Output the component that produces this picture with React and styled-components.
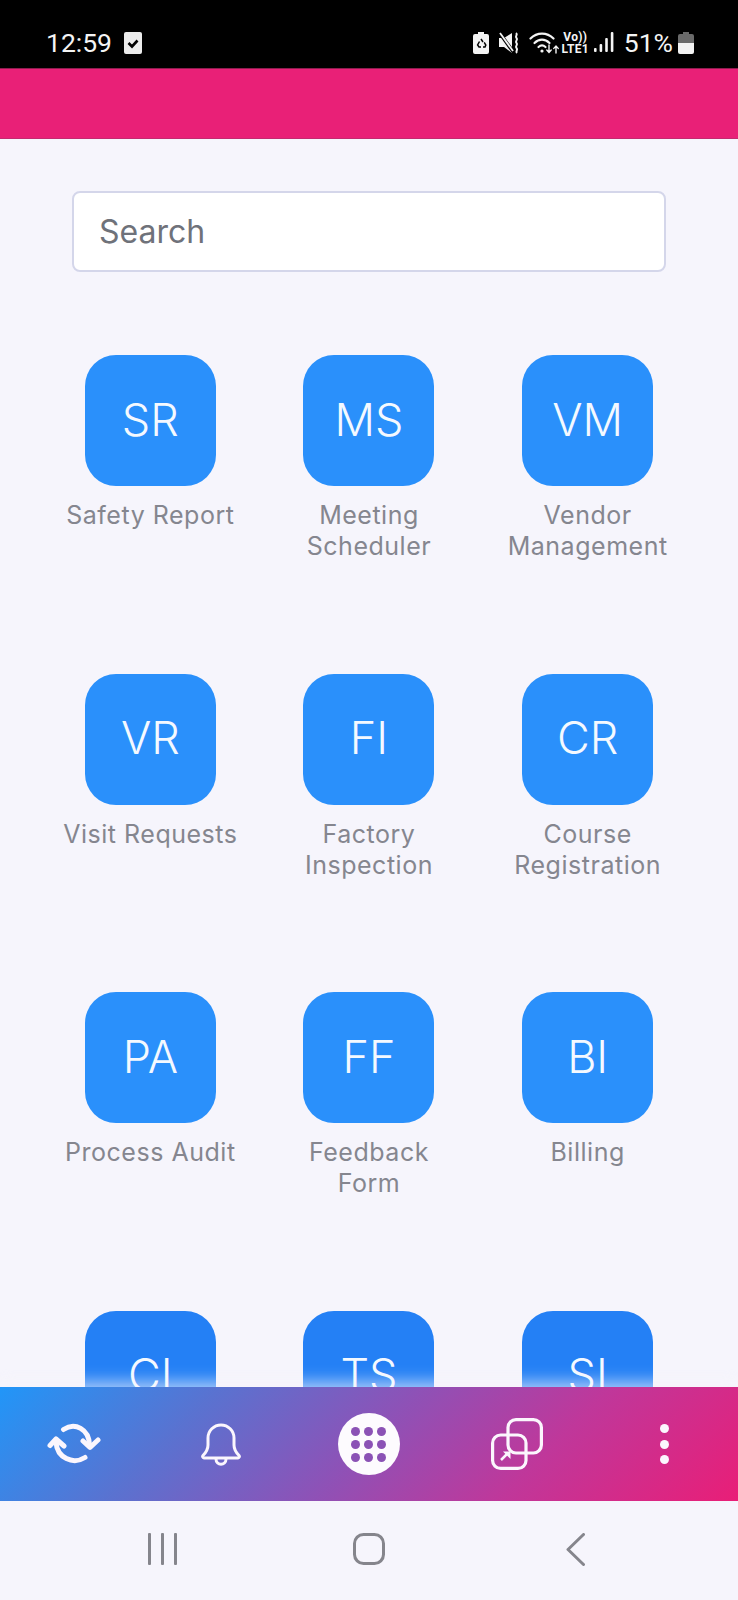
import React from "react";
import styled, { createGlobalStyle } from "styled-components";

const GlobalStyle = createGlobalStyle`
  html, body {
    margin: 0;
    padding: 0;
    background: #f6f5fc;
  }
  * {
    box-sizing: border-box;
  }
`;

const Screen = styled.div`
  display: flex;
  flex-direction: column;
  width: 738px;
  height: 1600px;
  overflow: hidden;
  font-family: Inter, "Noto Sans", sans-serif;
  background: #f6f5fc;
`;

const StatusBar = styled.div`
  display: flex;
  flex: none;
  justify-content: space-between;
  align-items: center;
  height: 68px;
  padding: 17px 44px 0 46px;
  color: #f4f4f4;
  background: #000;
`;
const StatusGroup = styled.div`
  display: flex;
  align-items: center;
  gap: ${(p) => p.$gap || 0}px;
  margin-left: ${(p) => p.$offset || 0}px;
`;
const StatusText = styled.span`
  font-family: Roboto, sans-serif;
  font-size: 26.5px;
  line-height: 32px;
`;
const LteMark = styled.span`
  display: flex;
  flex-direction: column;
  align-items: center;
  width: 27px;
  font-family: Roboto, sans-serif;
  font-size: 12px;
  font-weight: 700;
  line-height: 12px;
  letter-spacing: 0.3px;
`;

const PinkHeader = styled.div`
  flex: none;
  height: 71px;
  background: #e92077;
  border-top: 1px solid #8e1d4f;
  border-bottom: 1px solid #c42a70;
`;

const Content = styled.main`
  flex: 1;
  min-height: 0;
  overflow: hidden;
  padding: 52px 41px 0;
`;
const SearchInput = styled.input`
  display: block;
  width: 594px;
  height: 81px;
  margin: 0 auto 83px;
  padding: 0 25px;
  border: 2px solid #d4d6ea;
  border-radius: 8px;
  outline: none;
  font-family: Inter, sans-serif;
  font-size: 32px;
  color: #212529;
  background: #fff;

  &::placeholder {
    color: #6f727a;
    opacity: 1;
  }
`;
const AppGrid = styled.div`
  display: grid;
  grid-template-columns: repeat(3, 1fr);
  grid-auto-rows: 318.67px;
`;
const AppItem = styled.div`
  display: flex;
  flex-direction: column;
  align-items: center;
`;
const AppTile = styled.div`
  display: flex;
  justify-content: center;
  align-items: center;
  width: 131px;
  height: 131px;
  margin-bottom: 14px;
  padding-bottom: 3px;
  border-radius: 31px;
  font-size: 45px;
  font-weight: 350;
  color: #f4f9ff;
  background: ${(p) => (p.$dim ? "#2480f5" : "#2a90fb")};
`;
const AppLabel = styled.div`
  width: 182px;
  font-size: 25px;
  line-height: 31px;
  letter-spacing: 0.52px;
  text-align: center;
  color: #85868f;
`;

const BottomBar = styled.nav`
  position: relative;
  display: grid;
  flex: none;
  grid-template-columns: repeat(5, 1fr);
  align-items: center;
  height: 114px;
  background: linear-gradient(135deg, #2196f8 0%, #5a72d0 26%, #8f51b6 50%, #c0379a 72%, #e91e77 100%);
  box-shadow: 0 -6px 14px rgba(246, 245, 252, 0.6);
`;
const BarSlot = styled.div`
  display: flex;
  justify-content: center;
  align-items: center;
  color: #fbf6fd;
`;
const AppsButton = styled.div`
  display: grid;
  grid-template-columns: repeat(3, 9px);
  gap: 4px;
  justify-content: center;
  align-content: center;
  width: 62px;
  height: 62px;
  border-radius: 50%;
  background: #fdfbfe;
`;
const Dot = styled.span`
  width: ${(p) => p.$size}px;
  height: ${(p) => p.$size}px;
  border-radius: 50%;
  background: ${(p) => p.$color};
`;
const MoreButton = styled.div`
  display: flex;
  flex-direction: column;
  gap: 6.5px;
`;

const NavBar = styled.div`
  display: grid;
  flex: none;
  grid-template-columns: repeat(3, 206.5px);
  justify-content: center;
  align-items: start;
  height: 99px;
  padding-top: 32px;
  color: #85858c;
`;
const NavSlot = styled.div`
  display: flex;
  justify-content: center;
`;

const CheckBadge = () => (
  <svg width="18" height="22" viewBox="0 0 18 22">
    <rect width="18" height="22" rx="2" fill="#ececec" />
    <path d="M4.5 11l3.5 3.5 5.5-6" fill="none" stroke="#000" strokeWidth="2.6" />
  </svg>
);
const BatterySaver = () => (
  <svg width="16" height="22" viewBox="0 0 16 22">
    <path d="M5 0h6v2h3a2 2 0 0 1 2 2v16a2 2 0 0 1-2 2H2a2 2 0 0 1-2-2V4a2 2 0 0 1 2-2h3z" fill="#f4f4f4" />
    <path d="M8 7l2 3M6.5 9.5L4.6 13l1.4 2h2M10 15h2l.8-2-1.6-2.6" fill="none" stroke="#000" strokeWidth="1.5" />
  </svg>
);
const MuteVibrate = () => (
  <svg width="20" height="22" viewBox="0 0 20 22">
    <path d="M0 6h5l8-5v20l-8-6H0z" fill="#f4f4f4" />
    <path d="M0 0l15 21" stroke="#000" strokeWidth="3.5" />
    <path d="M1 1l13 18" stroke="#f4f4f4" strokeWidth="1.8" />
    <path d="M17 1c2.5 2-1.500 3 .5 5s-2 3 0 5-2 3 0 5-1.500 3 .5 5" fill="none" stroke="#f4f4f4" strokeWidth="2" />
  </svg>
);
const WifiData = () => (
  <svg width="30" height="23" viewBox="0 0 30 23" fill="none" stroke="#f4f4f4" strokeLinecap="round">
    <path d="M1.5 7.500C8 1 18 1 24.5 7.500" strokeWidth="2.2" />
    <path d="M5.5 12C10 7.500 16 7.500 20.5 12" strokeWidth="2.2" />
    <path d="M9.5 16c2.300-2 4.700-2 7 0" strokeWidth="2.2" />
    <circle cx="13" cy="20" r="1.6" fill="#f4f4f4" stroke="none" />
    <path d="M20 14v7M17.8 19l2.200 2.400 2.200-2.400M27 22v-7M24.8 17.400L27 15l2.200 2.400" strokeWidth="1.4" />
  </svg>
);
const Signal = () => (
  <svg width="20" height="21" viewBox="0 0 20 21" fill="#f4f4f4">
    <rect x="0" y="16" width="2.6" height="4" rx="1" />
    <rect x="5.6" y="12" width="2.6" height="8" rx="1" />
    <rect x="11.2" y="6" width="2.6" height="14" rx="1" />
    <rect x="16.8" y="0" width="2.6" height="20" rx="1" />
  </svg>
);
const Battery = () => (
  <svg width="16" height="22" viewBox="0 0 16 22">
    <path d="M5 0h6v2h3a2 2 0 0 1 2 2v7H0V4a2 2 0 0 1 2-2h3z" fill="#6a6a6a" />
    <path d="M0 11h16v9a2 2 0 0 1-2 2H2a2 2 0 0 1-2-2z" fill="#f2f2f2" />
  </svg>
);

const SyncIcon = () => (
  <svg width="54" height="42" viewBox="0 0 54 42" fill="none" stroke="currentColor" strokeWidth="5" strokeLinecap="round" strokeLinejoin="round">
    <path d="M16.5 6.500C28 -1 42 6 42.500 22" />
    <path d="M36 18l7 6.500 8-7.500" />
    <path d="M38 34.500C26 42 10 35 9 19" />
    <path d="M3 22.500l6-6.500 8 7" />
  </svg>
);
const BellIcon = () => (
  <svg width="40" height="43" viewBox="0 0 40 43" fill="none" stroke="currentColor" strokeWidth="3" strokeLinecap="round" strokeLinejoin="round">
    <path d="M7 22V15a13 13 0 0 1 26 0v7c0 5 2.500 8 5 10.500a1.500 1.500 0 0 1-1 2.500H3a1.500 1.500 0 0 1-1-2.500C4.500 30 7 27 7 22z" />
    <path d="M15 36c0 7 10 7 10 0" />
  </svg>
);
const WindowsIcon = () => (
  <svg width="52" height="52" viewBox="0 0 52 52" fill="none" stroke="currentColor" strokeWidth="3.2" strokeLinejoin="round">
    <rect x="17" y="1.600" width="33.400" height="33.400" rx="8" />
    <rect x="1.600" y="17" width="33.400" height="33.400" rx="8" />
    <path d="M10 42l7-7" strokeWidth="2.5" />
    <path d="M12 33.500h7.500V41z" fill="currentColor" stroke="none" />
  </svg>
);
const RecentsIcon = () => (
  <svg width="30" height="32" viewBox="0 0 30 32" fill="currentColor">
    <rect x="0" y="0" width="3" height="32" rx="1" />
    <rect x="13" y="0" width="3" height="32" rx="1" />
    <rect x="26" y="0" width="3" height="32" rx="1" />
  </svg>
);
const HomeIcon = () => (
  <svg width="32" height="32" viewBox="0 0 32 32" fill="none" stroke="currentColor" strokeWidth="3">
    <rect x="1.500" y="1.500" width="29" height="29" rx="9" />
  </svg>
);
const BackIcon = () => (
  <svg width="19" height="33" viewBox="0 0 19 33" fill="none" stroke="currentColor" strokeWidth="3" strokeLinecap="round" strokeLinejoin="round">
    <path d="M17.500 1.500L2 16.500l15.500 15" />
  </svg>
);

const apps = [
  ["SR", "Safety Report"],
  ["MS", "Meeting Scheduler"],
  ["VM", "Vendor Management"],
  ["VR", "Visit Requests"],
  ["FI", "Factory Inspection"],
  ["CR", "Course Registration"],
  ["PA", "Process Audit"],
  ["FF", "Feedback Form"],
  ["BI", "Billing"],
  ["CI"],
  ["TS"],
  ["SI"],
];

const App = () => {
  return (
    <Screen>
      <GlobalStyle />
      <StatusBar>
        <StatusGroup $gap={12}>
          <StatusText>12:59</StatusText>
          <CheckBadge />
        </StatusGroup>
        <StatusGroup>
          <StatusGroup $gap={10}>
            <BatterySaver />
            <MuteVibrate />
            <WifiData />
          </StatusGroup>
          <StatusGroup $gap={5} $offset={3}>
            <LteMark>
              <span>Vo))</span>
              <span>LTE1</span>
            </LteMark>
            <Signal />
          </StatusGroup>
          <StatusGroup $gap={5} $offset={10}>
            <StatusText>51%</StatusText>
            <Battery />
          </StatusGroup>
        </StatusGroup>
      </StatusBar>
      <PinkHeader />
      <Content>
        <SearchInput placeholder="Search" />
        <AppGrid>
          {apps.map(([code, name], i) => (
            <AppItem key={code}>
              <AppTile $dim={i >= 9}>{code}</AppTile>
              {name && <AppLabel>{name}</AppLabel>}
            </AppItem>
          ))}
        </AppGrid>
      </Content>
      <BottomBar>
        <BarSlot><SyncIcon /></BarSlot>
        <BarSlot><BellIcon /></BarSlot>
        <BarSlot>
          <AppsButton>
            {Array.from({ length: 9 }).map((_, i) => (
              <Dot key={i} $size={9} $color="#8b52b5" />
            ))}
          </AppsButton>
        </BarSlot>
        <BarSlot><WindowsIcon /></BarSlot>
        <BarSlot>
          <MoreButton>
            <Dot $size={9} $color="#fbf6fd" />
            <Dot $size={9} $color="#fbf6fd" />
            <Dot $size={9} $color="#fbf6fd" />
          </MoreButton>
        </BarSlot>
      </BottomBar>
      <NavBar>
        <NavSlot><RecentsIcon /></NavSlot>
        <NavSlot><HomeIcon /></NavSlot>
        <NavSlot><BackIcon /></NavSlot>
      </NavBar>
    </Screen>
  );
};

export default App;
